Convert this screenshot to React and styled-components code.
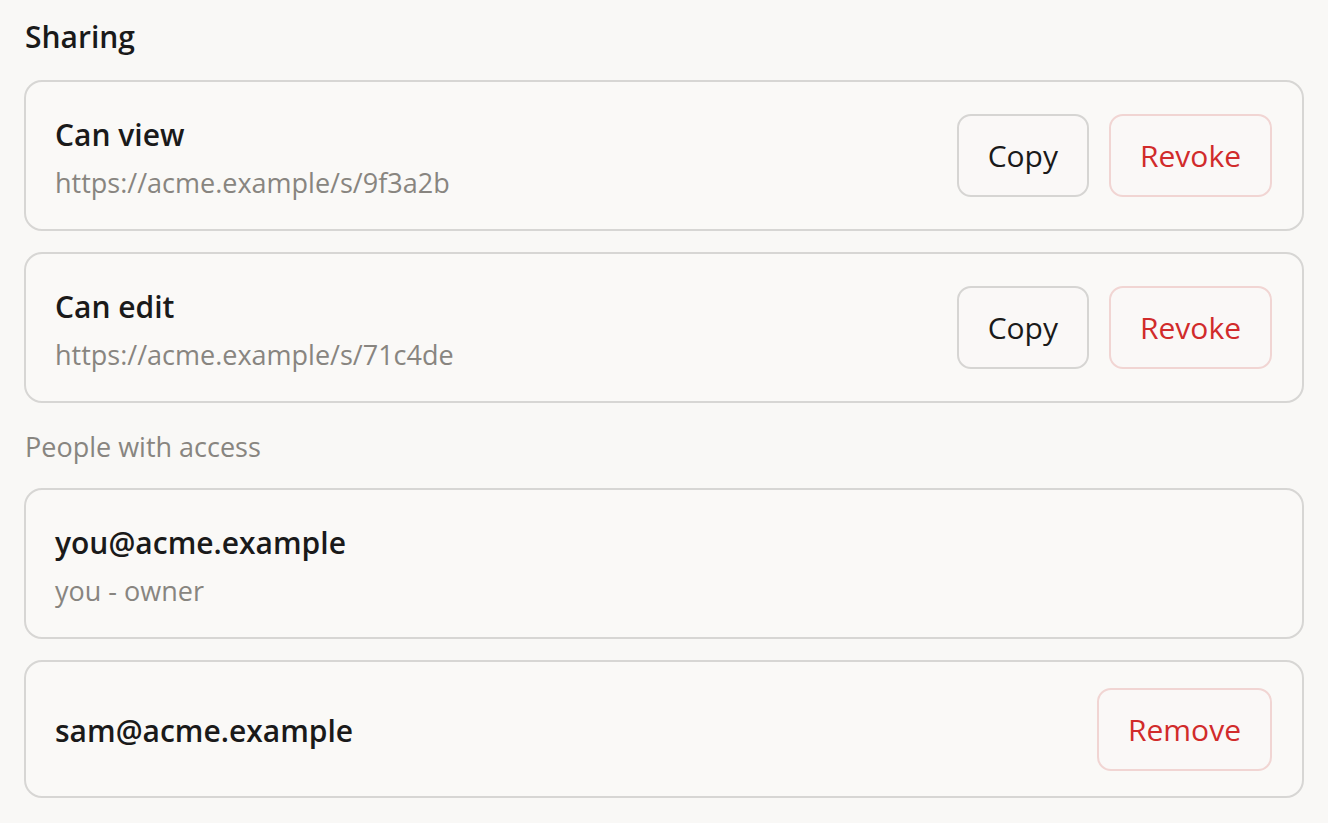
import React from 'react';
import styled, { createGlobalStyle } from 'styled-components';

const GlobalStyle = createGlobalStyle`
  html, body {
    margin: 0;
    padding: 0;
    background: #f9f8f6;
  }
  body {
    font-family: "Open Sans", "Noto Sans", sans-serif;
    color: #1a1a1a;
  }
`

const Page = styled.div`
  padding: 14px 24px 24px 24px;
  display: flex;
  flex-direction: column;
`

const Heading = styled.h2`
  margin: 0 0 20px 1px;
  font-size: 30px;
  font-weight: 600;
  line-height: 46px;
  color: #1a1a1a;
`

const SubHeading = styled.div`
  margin: 24px 0 21px 1px;
  font-size: 27px;
  line-height: 40px;
  color: #888580;
`

const List = styled.div`
  display: flex;
  flex-direction: column;
  gap: 21px;
`

const Card = styled.div`
  display: flex;
  align-items: center;
  justify-content: space-between;
  border: 2px solid #d7d6d4;
  border-radius: 18px;
  background: #faf9f7;
  padding: ${props => props.$compact ? '26px 30px 25px 29px' : '25px 30px 25px 29px'};
`

const Info = styled.div`
  display: flex;
  flex-direction: column;
  padding-top: ${props => props.$compact ? '3px' : '7px'};
`

const Title = styled.div`
  font-size: 30px;
  font-weight: 600;
  line-height: 42px;
  color: #1a1a1a;
`

const Detail = styled.div`
  margin-top: 6px;
  font-size: 27px;
  line-height: 42px;
  color: #888580;
`

const Actions = styled.div`
  display: flex;
  gap: 20px;
`

const Button = styled.button`
  height: 83px;
  padding: 0 29px;
  border-radius: 14px;
  background: #faf8f7;
  font-family: inherit;
  font-size: 30px;
  cursor: pointer;
  border: 2px solid ${props => props.$danger ? '#f1d5d3' : '#d6d5d3'};
  color: ${props => props.$danger ? '#d12b2b' : '#1a1a1a'};
`

const links = [
  { label: 'Can view', url: 'https://acme.example/s/9f3a2b' },
  { label: 'Can edit', url: 'https://acme.example/s/71c4de' },
]

export default function App() {
  return (
    <>
      <GlobalStyle />
      <Page>
        <Heading>Sharing</Heading>
        <List>
          {links.map(link => (
            <Card key={link.url}>
              <Info>
                <Title>{link.label}</Title>
                <Detail>{link.url}</Detail>
              </Info>
              <Actions>
                <Button>Copy</Button>
                <Button $danger>Revoke</Button>
              </Actions>
            </Card>
          ))}
        </List>
        <SubHeading>People with access</SubHeading>
        <List>
          <Card>
            <Info>
              <Title>you@acme.example</Title>
              <Detail>you - owner</Detail>
            </Info>
          </Card>
          <Card $compact>
            <Info $compact>
              <Title>sam@acme.example</Title>
            </Info>
            <Actions>
              <Button $danger>Remove</Button>
            </Actions>
          </Card>
        </List>
      </Page>
    </>
  )
}
